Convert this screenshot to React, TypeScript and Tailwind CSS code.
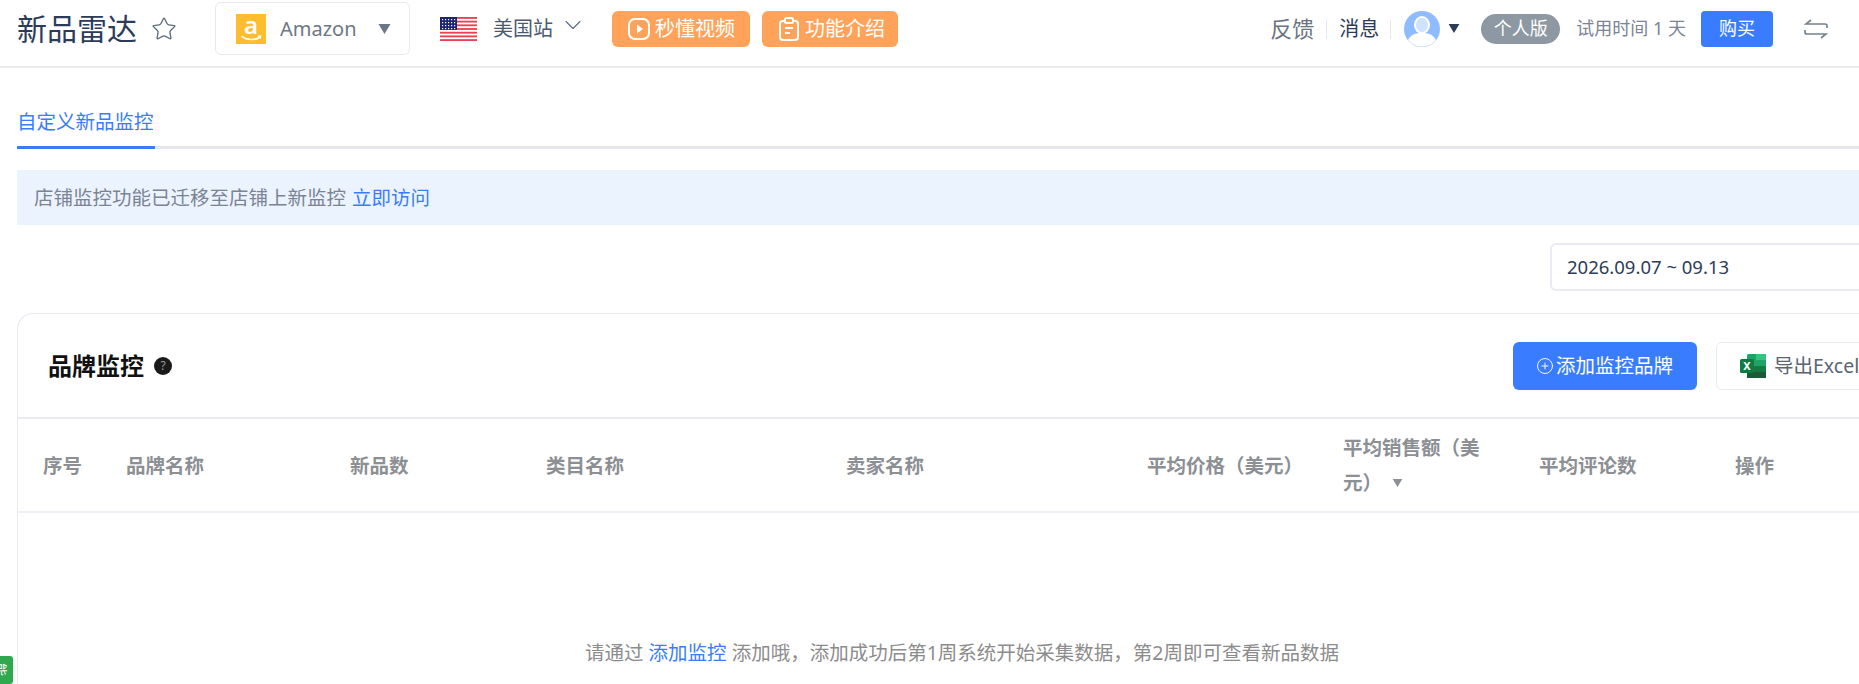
import { ChevronDown, CirclePlus, Star } from "lucide-react"

const FONT = "font-['Noto_Sans','Noto_Sans_CJK_SC',sans-serif]"

// 表头各列：列宽按截图量出来
const COLUMNS = [
  { label: "序号", width: "w-[83px]" },
  { label: "品牌名称", width: "w-[224px]" },
  { label: "新品数", width: "w-[196px]" },
  { label: "类目名称", width: "w-[300px]" },
  { label: "卖家名称", width: "w-[301px]" },
  { label: "平均价格（美元）", width: "w-[196px]" },
  { label: "平均销售额（美元）", width: "w-[196px] pr-[25px]", sorted: true },
  { label: "平均评论数", width: "w-[196px]" },
  { label: "操作", width: "w-[150px]" },
]

function Caret({ className }: { className: string }) {
  return (
    <svg viewBox="0 0 12 10" className={className} fill="currentColor">
      <path d="M0 0H12L6 10Z" />
    </svg>
  )
}

function AmazonLogo() {
  return (
    <div className="relative flex h-[30px] w-[30px] shrink-0 justify-center bg-[#fdbd2f] text-[24px] font-semibold leading-[22px] text-white">
      a
      <svg viewBox="0 0 30 30" className="absolute inset-0 h-[30px] w-[30px]">
        <path d="M6 22.5c5 4 13 4 18 .5" fill="none" stroke="#fff" strokeWidth="1.6" strokeLinecap="round" />
        <path d="M21.5 22l3.2-.2-.6 3" fill="none" stroke="#fff" strokeWidth="1.2" />
      </svg>
    </div>
  )
}

function UsFlag() {
  const stripes = [0, 2, 4, 6, 8, 10, 12]
  return (
    <svg viewBox="0 0 37 24" className="h-6 w-[37px] shrink-0">
      <rect width="37" height="24" fill="#fff" />
      {stripes.map((i) => (
        <rect key={i} y={(i * 24) / 13} width="37" height={24 / 13} fill="#e8414f" />
      ))}
      <rect width="17" height="13" fill="#1f2670" />
      {[2, 5, 8, 11].map((y) =>
        [2, 5, 8, 11, 14].map((x) => <rect key={`${x}-${y}`} x={x} y={y} width="1.2" height="1.2" fill="#fff" />)
      )}
    </svg>
  )
}

function Avatar() {
  return (
    <svg viewBox="0 0 36 36" className="h-9 w-9 shrink-0">
      <circle cx="18" cy="18" r="18" fill="#8fbcff" />
      <ellipse cx="18" cy="14" rx="8" ry="9" fill="#fff" />
      <ellipse cx="18" cy="14" rx="6" ry="7.2" fill="#cfe2ff" />
      <path d="M4 29c3-6 8-7 14-7s11 1 14 7a18 18 0 0 1-28 0Z" fill="#fff" />
    </svg>
  )
}

function PlayIcon() {
  return (
    <svg viewBox="0 0 24 24" className="h-6 w-6 shrink-0" fill="none" stroke="#fff" strokeWidth="2">
      <rect x="2" y="2" width="20" height="20" rx="6" />
      <path d="M10 7.5v9l6-4.5Z" fill="#fff" stroke="none" />
    </svg>
  )
}

function NoteIcon() {
  return (
    <svg viewBox="0 0 24 24" className="h-6 w-6 shrink-0" fill="none" stroke="#fff" strokeWidth="2">
      <rect x="3" y="4" width="18" height="19" rx="3" />
      <rect x="8" y="1" width="8" height="5" rx="1.5" fill="#ffa35a" />
      <path d="M8 11h8M8 16h5" />
    </svg>
  )
}

function SwapIcon() {
  return (
    <svg viewBox="0 0 24 20" className="h-5 w-6" fill="none" stroke="#76838f" strokeWidth="1.7">
      <path d="M7 1 2 5h19a2 2 0 0 1 2 2v2" />
      <path d="M1 11v2a2 2 0 0 0 2 2h19l-5 4" />
    </svg>
  )
}

function ExcelIcon() {
  return (
    <div className="relative h-6 w-[26px] shrink-0">
      <svg viewBox="0 0 26 24" className="h-6 w-[26px]">
        <rect x="7" y="0" width="19" height="24" rx="1.5" fill="#21a366" />
        <rect x="16" y="0" width="10" height="6" fill="#33c481" />
        <rect x="7" y="12" width="19" height="6" fill="#107c41" />
        <rect x="7" y="18" width="19" height="6" fill="#185c37" />
        <rect x="0" y="5" width="14" height="14" rx="1.5" fill="#107c41" />
      </svg>
      <span className="absolute left-0 top-[5px] flex h-[14px] w-[14px] items-center justify-center text-[11px] font-bold leading-none text-white">
        X
      </span>
    </div>
  )
}

function Header() {
  return (
    <header className="flex h-[68px] items-center border-b-2 border-[#eaebf2] pb-[9px] pl-[17px]">
      <h1 className="text-[30px] leading-none text-[#2d3b5a]">新品雷达</h1>
      <Star className="ml-[14px] h-[26px] w-[26px] text-[#5d6d80]" strokeWidth={1.25} />
      <div className="ml-[38px] flex h-[53px] w-[195px] items-center rounded-[6px] border border-[#e8e8f2] pl-5">
        <AmazonLogo />
        <span className="ml-[14px] text-[20px] text-[#6b7785]">Amazon</span>
        <Caret className="ml-[21px] h-[10px] w-[13px] text-[#6b7785]" />
      </div>
      <span className="ml-[30px]">
        <UsFlag />
      </span>
      <span className="ml-4 text-[20px] text-[#4b5a70]">美国站</span>
      <ChevronDown className="mb-[7px] ml-[6px] h-7 w-7 text-[#5d6d80]" strokeWidth={1} />
      <div className="ml-[25px] flex h-9 w-[138px] items-center gap-1 rounded-[6px] bg-[#ffa35a] pl-[15px] text-[20px] text-white">
        <PlayIcon />
        秒懂视频
      </div>
      <div className="ml-3 flex h-9 w-[136px] items-center gap-1 rounded-[6px] bg-[#ffa35a] pl-[15px] text-[20px] text-white">
        <NoteIcon />
        功能介绍
      </div>
      <div className="ml-auto flex items-center">
        <span className="text-[22px] text-[#6b7280]">反馈</span>
        <span className="mx-3 h-5 w-px bg-[#e6e8ee]" />
        <span className="text-[20px] text-[#2d3b5a]">消息</span>
        <span className="ml-[11px] mr-[13px] h-5 w-px bg-[#e6e8ee]" />
        <Avatar />
        <Caret className="ml-2 h-[9px] w-3 text-[#2d3b5a]" />
        <span className="ml-[21px] flex h-[30px] w-[79px] items-center justify-center rounded-full bg-[#8d98a3] text-[18px] text-white">
          个人版
        </span>
        <span className="ml-4 text-[18px] text-[#7b8494]">试用时间 1 天</span>
        <span className="ml-[15px] flex h-9 w-[72px] items-center justify-center rounded-[4px] bg-[#3a7cff] text-[18px] text-white">
          购买
        </span>
        <span className="ml-[31px] mr-[31px]">
          <SwapIcon />
        </span>
      </div>
    </header>
  )
}

function BrandTable() {
  return (
    <section className="mt-[22px] h-[400px] w-[1900px] rounded-tl-[16px] border-l border-t border-[#e8e8f2]">
      <div className="flex h-[105px] items-center border-b-2 border-[#eaebf2] pl-[30px]">
        <h2 className="w-[96px] shrink-0 text-[24px] font-bold text-[#111]">品牌监控</h2>
        <span className="ml-[10px] flex h-[18px] w-[18px] shrink-0 items-center justify-center rounded-full bg-[#1a1a1a] text-[12px] text-[#999]">
          ?
        </span>
        <button className="ml-[1341px] flex h-12 w-[184px] shrink-0 items-center rounded-[6px] bg-[#3a7cff] pl-[23px] text-[19.5px] text-white">
          <CirclePlus className="mr-[2px] h-[18px] w-[18px]" strokeWidth={1.25} />
          添加监控品牌
        </button>
        <button className="ml-[19px] flex h-12 w-[160px] shrink-0 items-center rounded-[6px] border border-[#e8e8f2] pl-[23px] text-[19.5px] text-[#5a6472]">
          <ExcelIcon />
          <span className="ml-2 whitespace-nowrap">导出Excel</span>
        </button>
      </div>
      <div className="flex h-[94px] items-center border-b-2 border-[#eef0f5] text-[19.5px] font-bold leading-[35px] text-[#8c8f94]">
        {COLUMNS.map((c) => (
          <div key={c.label} className={`${c.width} shrink-0 pl-[25px]`}>
            {c.label}
            {c.sorted && <Caret className="mb-[3px] ml-[10px] inline h-2 w-[11px] text-[#8c8f94]" />}
          </div>
        ))}
      </div>
      <p className="pl-[567px] pt-[125px] text-[19.5px] text-[#8c8c8c]">
        请通过 <span className="text-[#3a7cff]">添加监控</span> 添加哦，添加成功后第1周系统开始采集数据，第2周即可查看新品数据
      </p>
    </section>
  )
}

export default function App() {
  return (
    <div className={`relative h-[684px] w-[1859px] overflow-hidden bg-white ${FONT}`}>
      <Header />
      <main className="pl-[17px]">
        <div className="mt-[39px] h-[42px] w-[138px] border-b-[3px] border-[#3a7cff] text-[19.5px] text-[#3a7cff]">
          自定义新品监控
        </div>
        <div className="-mt-[3px] ml-[138px] h-[3px] bg-[#e5e7eb]" />
        <div className="mt-[21px] flex h-[55px] items-center bg-[#ebf3ff] pl-[17px] text-[19.5px] text-[#7b8494]">
          店铺监控功能已迁移至店铺上新监控<span className="ml-[6px] text-[#3a7cff]">立即访问</span>
        </div>
        <div className="ml-[1533px] mt-[18px] flex h-12 w-[340px] items-center rounded-[6px] border-2 border-[#eaebf2] pl-[15px] text-[18.5px] text-[#2d3b5a]">
          2026.09.07 ~ 09.13
        </div>
        <BrandTable />
      </main>
      {/* 左下角贴边的绿色小标签，文字被边缘裁掉一半 */}
      <div className="absolute bottom-0 left-0 flex h-7 w-[13px] items-start justify-center overflow-hidden rounded-r-[3px] bg-[#2fa84f] pr-[6px] text-[13px] leading-none text-white [text-orientation:sideways] [writing-mode:vertical-rl]">
        能
      </div>
    </div>
  )
}
